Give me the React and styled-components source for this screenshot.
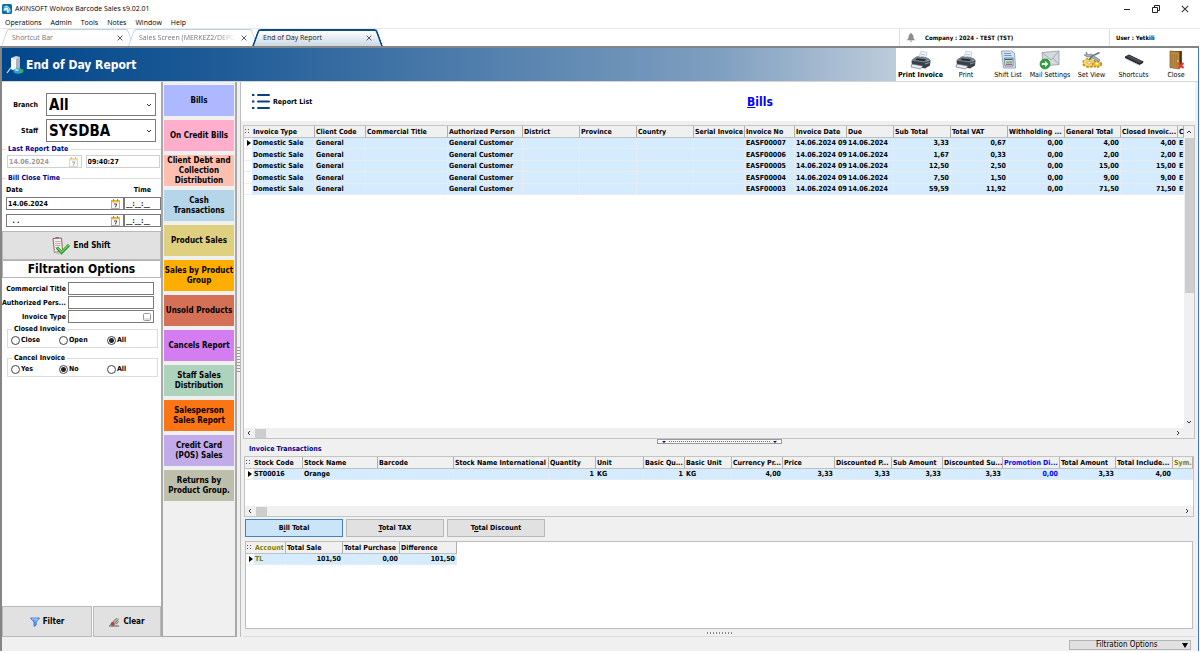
import React from 'react';
import styled, { createGlobalStyle } from 'styled-components';

const invoiceColumns = [
  { title: 'Invoice Type', width: 63 },
  { title: 'Client Code', width: 51 },
  { title: 'Commercial Title', width: 82 },
  { title: 'Authorized Person', width: 75 },
  { title: 'District', width: 57 },
  { title: 'Province', width: 57 },
  { title: 'Country', width: 57 },
  { title: 'Serial Invoice', width: 51 },
  { title: 'Invoice No', width: 50 },
  { title: 'Invoice Date', width: 52 },
  { title: 'Due', width: 47 },
  { title: 'Sub Total', width: 57, right: true },
  { title: 'Total VAT', width: 57, right: true },
  { title: 'Withholding ...', width: 57, right: true },
  { title: 'General Total', width: 56, right: true },
  { title: 'Closed Invoic...', width: 57, right: true },
  { title: 'C' },
];

const invoice = (no, sub, vat, total) => [
  'Domestic Sale', 'General', '', 'General Customer', '', '', '', '',
  no, '14.06.2024 09', '14.06.2024', sub, vat, '0,00', total, total, 'E',
];

const invoiceRows = [
  invoice('EASF00007', '3,33', '0,67', '4,00'),
  invoice('EASF00006', '1,67', '0,33', '2,00'),
  invoice('EASF00005', '12,50', '2,50', '15,00'),
  invoice('EASF00004', '7,50', '1,50', '9,00'),
  invoice('EASF00003', '59,59', '11,92', '71,50'),
];

const stockColumns = [
  { title: 'Stock Code', width: 50 },
  { title: 'Stock Name', width: 75 },
  { title: 'Barcode', width: 76 },
  { title: 'Stock Name International', width: 95 },
  { title: 'Quantity', width: 47, right: true },
  { title: 'Unit', width: 48 },
  { title: 'Basic Qu...', width: 41, right: true },
  { title: 'Basic Unit', width: 47 },
  { title: 'Currency Pr...', width: 51, right: true },
  { title: 'Price', width: 52, right: true },
  { title: 'Discounted P...', width: 57, right: true },
  { title: 'Sub Amount', width: 51, right: true },
  { title: 'Discounted Su...', width: 60, right: true },
  { title: 'Promotion Di...', width: 57, right: true, color: '#0000ff' },
  { title: 'Total Amount', width: 56, right: true },
  { title: 'Total Include...', width: 57, right: true },
  { title: 'Sym.', color: '#808000' },
];

const stockRows = [
  ['ST00016', 'Orange', '', '', '1', 'KG', '1', 'KG', '4,00', '3,33', '3,33', '3,33', '3,33', '0,00', '3,33', '4,00', ''],
];

const totalColumns = [
  { title: 'Account', width: 32, color: '#808000' },
  { title: 'Total Sale', width: 57, right: true },
  { title: 'Total Purchase', width: 57, right: true },
  { title: 'Difference', width: 57, right: true },
];

const totalRows = [['TL', '101,50', '0,00', '101,50']];

const reports = [
  { label: 'Bills', color: '#adb8ff' },
  { label: 'On Credit Bills', color: '#ffaecb' },
  { label: 'Client Debt and Collection Distribution', color: '#ffbfae' },
  { label: 'Cash Transactions', color: '#b5d5e8' },
  { label: 'Product Sales', color: '#dfd07f' },
  { label: 'Sales by Product Group', color: '#ffae00' },
  { label: 'Unsold Products', color: '#d37056' },
  { label: 'Cancels Report', color: '#d37df0' },
  { label: 'Staff Sales Distribution', color: '#aed3bd' },
  { label: 'Salesperson Sales Report', color: '#fa7514' },
  { label: 'Credit Card (POS) Sales', color: '#c1abe8' },
  { label: 'Returns by Product Group.', color: '#bdbfab' },
];

const PrinterIcon = () => (
  <svg width="22" height="20" viewBox="0 0 22 20">
    <path d="M8 9 L11 1 L17 2.5 L15 10 Z" fill="#f4f7fa" stroke="#a9b4bd" strokeWidth=".6" />
    <path d="M11 4 L15 5 M10.4 6 L14.4 7" stroke="#8aa9c8" strokeWidth=".7" />
    <path d="M3 9 L7 6.5 L18 8 L20.5 10.5 L20 15.5 L15 18.5 L2 15.5 L1.5 11 Z" fill="#394047" />
    <path d="M3 9 L7 6.5 L18 8 L20.5 10.5 L15 12.5 L1.5 10.8 Z" fill="#717c86" />
    <path d="M7 8.5 L16 9.4 L14.5 11 L5.5 10 Z" fill="#1c2024" />
    <path d="M2 14 L13 16 L10.5 19 L1 17 Z" fill="#e6ecf1" stroke="#59636c" strokeWidth=".6" />
    <path d="M15 14 L19.5 12.5" stroke="#aeb8c0" strokeWidth=".8" />
    <circle cx="18" cy="10.5" r=".7" fill="#8fd0ff" />
  </svg>
);

const ShiftListIcon = () => (
  <svg width="22" height="20" viewBox="0 0 22 20">
    <path d="M4.5 1 H14.5 L17.5 3 L18.5 18 H6.5 Z" fill="#d6e3ee" stroke="#8fa9c0" />
    <path d="M7 3.5 H14 M7.2 5.5 H14.5" stroke="#6c8fb5" strokeWidth=".9" />
    <path d="M7.5 8 H16 V16 H8 Z" fill="#fff" stroke="#50759b" strokeWidth=".9" />
    <path d="M8 9.5 H15.5" stroke="#34557b" strokeWidth="1.3" />
    <path d="M9 12 H15" stroke="#49a449" strokeWidth="1.4" />
    <path d="M9 14.2 H15" stroke="#cf4141" strokeWidth="1.4" />
  </svg>
);

const MailIcon = () => (
  <svg width="22" height="20" viewBox="0 0 22 20">
    <path d="M3 2.5 L20 1 V14.5 L4 16 Z" fill="#d5dade" stroke="#939ba1" strokeWidth=".8" />
    <path d="M3 2.5 L12 10 L20 1 M4 16 L9.5 8 M20 14.5 L14 8" fill="none" stroke="#959da3" strokeWidth=".8" />
    <circle cx="6" cy="14" r="5" fill="#2ea33a" stroke="#16752a" strokeWidth=".6" />
    <path d="M2.8 13 H6 V11 L9.4 14 L6 17 V15 H2.8 Z" fill="#fff" />
  </svg>
);

const GearIcon = () => (
  <svg width="22" height="20" viewBox="0 0 22 20">
    <ellipse cx="8" cy="13" rx="6" ry="4" fill="#edc242" stroke="#c39015" strokeWidth="2" strokeDasharray="2.4 1.6" />
    <ellipse cx="8" cy="12.6" rx="5.4" ry="3.4" fill="#f6d768" />
    <ellipse cx="8" cy="12.6" rx="2" ry="1.3" fill="#fff" stroke="#b88a1b" strokeWidth=".6" />
    <ellipse cx="16" cy="14" rx="4.2" ry="3" fill="#edc242" stroke="#c39015" strokeWidth="1.8" strokeDasharray="2 1.4" />
    <ellipse cx="16" cy="13.6" rx="1.4" ry=".9" fill="#fff" />
    <path d="M5 2 L7.5 4.8 L10 4 L19 10 L17.5 11.5 L9 6.8 L6 7 L3 4.8 L5.5 5 Z" fill="#aab3ba" stroke="#5d676e" strokeWidth=".6" />
    <path d="M18.5 2.5 L11 6 L8 10" fill="none" stroke="#657078" strokeWidth="1.5" />
  </svg>
);

const KeyboardIcon = () => (
  <svg width="22" height="20" viewBox="0 0 22 20">
    <path d="M2 6.5 L6 4.5 L20.5 11.5 L20 13 L16.5 15 L2 8 Z" fill="#25282c" />
    <path d="M3.5 6.8 L6 5.5 L19 11.7 L16.5 13 Z" fill="#595f66" />
    <path d="M5 6.5 L17.5 12.4" stroke="#2b2e32" strokeWidth=".8" strokeDasharray="1.4 .6" />
    <path d="M2 8.5 L16.5 15.5" stroke="#b9bec3" strokeWidth=".7" />
  </svg>
);

const DoorIcon = () => (
  <svg width="22" height="20" viewBox="0 0 22 20">
    <path d="M5 1 H17 V17.5 H5 Z" fill="#6e4a1b" />
    <path d="M14 2 H16 V17 H14 Z" fill="#4a2e0e" />
    <path d="M5 1 L14.5 2 V19 L5 17.5 Z" fill="#b98a45" stroke="#7b5420" strokeWidth=".7" />
    <path d="M7.2 3.5 V16 M9.6 4 V16.5 M11.8 4.3 V16.8" stroke="#9c7031" strokeWidth=".7" />
    <circle cx="12.8" cy="11" r=".8" fill="#f3dc8c" />
    <path d="M13.5 13 L18.5 18 M18.5 13 L13.5 18" stroke="#e03b32" strokeWidth="2" />
  </svg>
);

const LogoIcon = () => (
  <svg width="10" height="10" viewBox="0 0 10 10">
    <rect width="10" height="10" rx="1.5" fill="#17699d" />
    <path d="M1.5 2.5 L5 1.2 L8.5 5 V8.8 H5.5 L1.5 6 Z" fill="#4fb3df" />
    <path d="M2 6.5 C3.5 3.5 6 3.5 6 8.5" fill="none" stroke="#fff" strokeWidth="1.4" />
    <path d="M3 2.5 C6 2 8 4 8 7" fill="none" stroke="#d7f0fb" strokeWidth=".8" />
  </svg>
);

const ReportIcon = () => (
  <svg width="18" height="20" viewBox="0 0 18 20">
    <path d="M5 3 L10 1 L14 2 V14 L10 16 L5 14 Z" fill="#cfd6dc" />
    <path d="M5 3 L10 4.2 V16 L5 14 Z" fill="#f4f6f8" />
    <path d="M10 4.2 L14 2 V14 L10 16 Z" fill="#aab4bd" />
    <path d="M5 12.5 L1 18" stroke="#dfe7ee" strokeWidth="1.2" />
    <ellipse cx="12" cy="16" rx="4.5" ry="2.8" fill="#2e9fd6" />
    <ellipse cx="10.8" cy="15" rx="2" ry="1" fill="#a9e2fa" />
    <circle cx="15.5" cy="16" r="2" fill="#3fae49" />
  </svg>
);

const BellIcon = () => (
  <svg width="8" height="9" viewBox="0 0 8 9">
    <path d="M4 0 C4.6 0 4.8 .6 4.7 1 C6.4 1.6 6.4 3 6.5 4.5 C6.6 5.8 7.5 6.3 8 7.2 H0 C.5 6.3 1.4 5.8 1.5 4.5 C1.6 3 1.6 1.6 3.3 1 C3.2 .6 3.4 0 4 0 Z M3 7.7 H5 C5 9 3 9 3 7.7 Z" fill="#8c8c8c" />
  </svg>
);

const CalendarIcon = () => (
  <svg width="9" height="10" viewBox="0 0 9 10">
    <rect x=".5" y="1.5" width="8" height="8" fill="#fafafa" stroke="#8f8f8f" strokeWidth=".7" />
    <path d="M.3 1.2 H8.7 V3.4 H.3 Z" fill="#f0b93a" />
    <path d="M2.5 0 V2 M6.5 0 V2" stroke="#8a6a20" strokeWidth=".8" />
    <path d="M3 5 H5.8 L4.3 8.4" fill="none" stroke="#333" strokeWidth=".9" />
  </svg>
);

const EndShiftIcon = () => (
  <svg width="18" height="18" viewBox="0 0 18 18">
    <path d="M1 1.5 L9.5 1 L10.5 14 L2.5 15.5 Z" fill="#f2eeee" stroke="#a05f64" />
    <path d="M3.5 .8 L7 .5" stroke="#777" strokeWidth="1.6" />
    <path d="M3 4.5 H8.5 M3 6.5 H8.5 M3.2 8.5 H8.5 M3.4 10.5 H7" stroke="#bb8c90" strokeWidth=".7" />
    <path d="M1 13 L7 17.5" stroke="#b9babc" strokeWidth="1.2" />
    <path d="M5 10.5 L9.5 15.5 L17 8" fill="none" stroke="#1d8a25" strokeWidth="3" />
    <path d="M5.4 10.6 L9.5 15 L16.6 8" fill="none" stroke="#63d254" strokeWidth="1.6" />
  </svg>
);

const FunnelIcon = () => (
  <svg width="10" height="10" viewBox="0 0 10 10">
    <path d="M.5 1 H9.5 L6.2 5 V8 L4 9.5 V5 Z" fill="#5d9cf5" stroke="#2b6fd6" strokeWidth=".8" />
    <path d="M2 2 H7.5 L5.2 4.6" fill="none" stroke="#cfe2ff" strokeWidth=".8" />
  </svg>
);

const EraserIcon = () => (
  <svg width="11" height="10" viewBox="0 0 11 10">
    <path d="M0 9 H10" stroke="#333" strokeWidth=".8" />
    <path d="M1.5 7.5 L7 1.5 L9.5 2.5 L4.5 8.5 Z" fill="#9fb3b8" stroke="#444" strokeWidth=".6" />
    <circle cx="3.6" cy="6.8" r="1.8" fill="#d5362b" />
    <path d="M7 2.2 L8.6 .5 L10 1.6 L8.8 3.3 Z" fill="#f0b93a" />
    <path d="M7 7.5 L9.5 4.5" stroke="#555" strokeWidth=".8" />
  </svg>
);

const ListIcon = () => (
  <svg width="18" height="17" viewBox="0 0 18 17">
    <path d="M6 2 H17 M6 8.5 H17 M6 15 H17" stroke="#0b3f86" strokeWidth="2" strokeLinecap="round" />
    <path d="M0 2 H2.4 M0 8.5 H2.4 M0 15 H2.4" stroke="#0b3f86" strokeWidth="2" />
  </svg>
);

const Chevron = ({ turn = 0, size = 6 }) => (
  <svg width={size} height={size} viewBox="0 0 6 6">
    <path d="M1 2 L3 4 L5 2" fill="none" stroke="#333" strokeWidth="1" transform={`rotate(${turn} 3 3)`} />
  </svg>
);

const CrossIcon = ({ size = 6 }) => (
  <svg width={size} height={size} viewBox="0 0 6 6">
    <path d="M.6 .6 L5.4 5.4 M5.4 .6 L.6 5.4" stroke="#333" strokeWidth=".8" />
  </svg>
);

const tools = [
  { label: 'Print Invoice', icon: PrinterIcon, strong: true, width: 49 },
  { label: 'Print', icon: PrinterIcon, width: 42 },
  { label: 'Shift List', icon: ShiftListIcon, width: 42 },
  { label: 'Mail Settings', icon: MailIcon, width: 42 },
  { label: 'Set View', icon: GearIcon, width: 41 },
  { label: 'Shortcuts', icon: KeyboardIcon, width: 43 },
  { label: 'Close', icon: DoorIcon, width: 42 },
];

const Grid = ({ label, columns, rows, compact }) => (
  <Table $compact={compact} aria-label={label}>
    <colgroup>
      <col style={{ width: 8 }} />
      {columns.map((column) => (
        <col key={column.title} style={{ width: column.width }} />
      ))}
    </colgroup>
    <thead>
      <tr>
        <HeadCell $marker>
          <Dots />
        </HeadCell>
        {columns.map((column) => (
          <HeadCell key={column.title} $color={column.color}>
            {column.title}
          </HeadCell>
        ))}
      </tr>
    </thead>
    <tbody>
      {rows.map((row, index) => (
        <Row key={index}>
          <MarkerCell>{index === 0 && <RowArrow />}</MarkerCell>
          {row.map((value, i) => (
            <Cell key={columns[i].title} $right={columns[i].right} $color={columns[i].color}>
              {value}
            </Cell>
          ))}
        </Row>
      ))}
    </tbody>
  </Table>
);

const HorizontalScroll = ({ wide }) => (
  <HScroll $wide={wide}>
    <Chevron turn={90} />
    <HThumb />
    <Chevron turn={-90} />
  </HScroll>
);

const RadioGroup = ({ title, name, options, value }) => (
  <Group>
    <Legend>{title}</Legend>
    <Radios>
      {options.map((option) => (
        <RadioLabel key={option}>
          <Radio name={name} defaultChecked={option === value} />
          {option}
        </RadioLabel>
      ))}
    </Radios>
  </Group>
);

const DateRow = ({ name, value }) => (
  <CloseTimeRow>
    <DateBox>
      <BareInput aria-label={`${name} date`} defaultValue={value} />
      <CalendarIcon />
    </DateBox>
    <DateBox>
      <BareInput aria-label={`${name} time`} defaultValue="__:__:__" />
    </DateBox>
  </CloseTimeRow>
);

const App = () => {
  return (
    <Window>
      <GlobalStyle />
      <TitleBar>
        <LogoIcon />
        <span>AKINSOFT Wolvox Barcode Sales s9.02.01</span>
        <WindowButtons>
          <WindowButton aria-label="Minimize">
            <svg width="8" height="8" viewBox="0 0 8 8">
              <path d="M1 4.5 H7" stroke="#222" />
            </svg>
          </WindowButton>
          <WindowButton aria-label="Restore">
            <svg width="8" height="8" viewBox="0 0 8 8">
              <path d="M.5 2.5 H5.5 V7.5 H.5 Z M2.5 2.5 V.5 H7.5 V5.5 H5.5" fill="none" stroke="#222" />
            </svg>
          </WindowButton>
          <WindowButton aria-label="Close window">
            <CrossIcon size={8} />
          </WindowButton>
        </WindowButtons>
      </TitleBar>
      <MenuBar>
        {['Operations', 'Admin', 'Tools', 'Notes', 'Window', 'Help'].map((item) => (
          <MenuItem key={item}>{item}</MenuItem>
        ))}
      </MenuBar>
      <TabStrip>
        <Tab $width={127}>
          <TabText>Shortcut Bar</TabText>
          <CrossIcon />
        </Tab>
        <Tab $width={124}>
          <TabText $fade>Sales Screen (MERKEZ2/DEPO</TabText>
          <CrossIcon />
        </Tab>
        <Tab $width={125} $active>
          <TabText>End of Day Report</TabText>
          <CrossIcon />
        </Tab>
        <CompanyBar>
          <Company>
            <BellIcon />
            Company : 2024 - TEST (TST)
          </Company>
          <User>User : Yetkili</User>
        </CompanyBar>
      </TabStrip>

      <Frame>
        <Banner>
          <ReportIcon />
          <BannerTitle>End of Day Report</BannerTitle>
          <Toolbar>
            {tools.map(({ label, icon: Icon, strong, width }) => (
              <Tool key={label} $strong={strong} $width={width}>
                <Icon />
                {label}
              </Tool>
            ))}
          </Toolbar>
        </Banner>

        <Body>
          <FilterPanel>
            <PickRow>
              <span>Branch</span>
              <Picker>
                <PickSelect>
                  <option>All</option>
                </PickSelect>
                <Chevron />
              </Picker>
            </PickRow>
            <PickRow>
              <span>Staff</span>
              <Picker>
                <PickSelect>
                  <option>SYSDBA</option>
                </PickSelect>
                <Chevron />
              </Picker>
            </PickRow>

            <DateGroup>
              <Legend $blue>Last Report Date</Legend>
              <LastReport>
                <DateBox $off>
                  <BareInput aria-label="Last report date" disabled defaultValue="14.06.2024" />
                  <CalendarIcon />
                </DateBox>
                <DateBox $pale>
                  <BareInput aria-label="Last report time" defaultValue="09:40:27" />
                </DateBox>
              </LastReport>
            </DateGroup>
            <DateGroup>
              <Legend $blue>Bill Close Time</Legend>
              <DateHeads>
                <span>Date</span>
                <span>Time</span>
              </DateHeads>
              <DateRow name="From" value="14.06.2024" />
              <DateRow name="To" value="  . ." />
            </DateGroup>

            <EndShift>
              <EndShiftIcon />
              End Shift
            </EndShift>
            <FilterTitle>Filtration Options</FilterTitle>

            <Fields>
              <Field>
                <span>Commercial Title</span>
                <FieldInput />
              </Field>
              <Field>
                <span>Authorized Pers...</span>
                <FieldInput />
              </Field>
              <Field>
                <span>Invoice Type</span>
                <FieldBox>
                  <BareInput />
                  <svg width="8" height="8" viewBox="0 0 8 8">
                    <rect x=".5" y=".5" width="7" height="7" rx="1" fill="#fff" stroke="#999" />
                    <path d="M1.5 6 H6.5" stroke="#888" strokeDasharray="1 1" />
                  </svg>
                </FieldBox>
              </Field>
            </Fields>
            <RadioGroup title="Closed Invoice" name="closed" options={['Close', 'Open', 'All']} value="All" />
            <RadioGroup title="Cancel Invoice" name="cancel" options={['Yes', 'No', 'All']} value="No" />

            <FilterActions>
              <GrayButton>
                <FunnelIcon />
                Filter
              </GrayButton>
              <GrayButton>
                <EraserIcon />
                Clear
              </GrayButton>
            </FilterActions>
          </FilterPanel>

          <ReportNav>
            {reports.map((report) => (
              <ReportButton key={report.label} $color={report.color}>
                {report.label}
              </ReportButton>
            ))}
          </ReportNav>
          <SideSplitter>
            <VerticalGrip />
          </SideSplitter>

          <Main>
            <ReportHeader>
              <ReportListButton>
                <ListIcon />
                Report List
              </ReportListButton>
              <ReportTitle>
                <u>B</u>ills
              </ReportTitle>
            </ReportHeader>

            <Panels>
              <InvoiceGrid>
                <InvoiceArea>
                  <GridClip>
                    <Grid label="Invoices" columns={invoiceColumns} rows={invoiceRows} />
                  </GridClip>
                  <VScroll>
                    <Chevron turn={180} />
                    <VThumb />
                    <Chevron />
                  </VScroll>
                </InvoiceArea>
                <HorizontalScroll />
              </InvoiceGrid>

              <Splitter>
                <SplitHandle>
                  <Triangle />
                  <HandleDots />
                  <Triangle />
                </SplitHandle>
              </Splitter>

              <Transactions>
                <Legend $blue>Invoice Transactions</Legend>
                <StockGrid>
                  <GridClip>
                    <Grid label="Invoice transactions" columns={stockColumns} rows={stockRows} />
                  </GridClip>
                  <HorizontalScroll wide />
                </StockGrid>
              </Transactions>

              <TotalTabs>
                <TotalTab $active>
                  B<u>i</u>ll Total
                </TotalTab>
                <TotalTab>
                  <u>T</u>otal TAX
                </TotalTab>
                <TotalTab>
                  T<u>o</u>tal Discount
                </TotalTab>
              </TotalTabs>
              <TotalPanel>
                <Grid compact label="Totals" columns={totalColumns} rows={totalRows} />
              </TotalPanel>
              <BottomSplitter>
                <HorizontalGrip />
              </BottomSplitter>
            </Panels>
          </Main>
        </Body>

        <StatusBar>
          <StatusButton>
            <span>Filtration Options</span>
            <Triangle $dark />
          </StatusButton>
        </StatusBar>
      </Frame>
    </Window>
  );
};

const GlobalStyle = createGlobalStyle`
  * {
    box-sizing: border-box;
  }
  body {
    margin: 0;
    background: #fff;
    color: #000;
    font: 7px/10px 'DejaVu Sans Condensed', 'DejaVu Sans', sans-serif;
  }
  button, input, select {
    margin: 0;
    padding: 0;
    border: 0;
    border-radius: 0;
    background: none;
    color: inherit;
    font: inherit;
  }
  svg {
    display: block;
    flex: none;
  }
`;

const Window = styled.div`
  min-height: 100vh;
  padding-bottom: 2px;
  display: flex;
  flex-direction: column;
`;

const TitleBar = styled.header`
  height: 17px;
  padding-left: 2px;
  display: flex;
  align-items: center;
  gap: 3px;
  font-family: 'Open Sans', sans-serif;
`;

const WindowButtons = styled.div`
  margin-left: auto;
  padding-right: 1px;
  display: flex;
`;

const WindowButton = styled.button`
  width: 29px;
  height: 16px;
  display: grid;
  place-items: center;
`;

const MenuBar = styled.nav`
  height: 11px;
  padding-left: 5px;
  display: flex;
  gap: 9px;
  font-family: 'Open Sans', sans-serif;
`;

const MenuItem = styled.button`
  height: 11px;
`;

const TabStrip = styled.div`
  height: 18px;
  border-top: 1px solid #e8e8e8;
  padding-left: 4px;
  display: flex;
  font-family: 'Open Sans', sans-serif;
`;

const Tab = styled.button`
  position: relative;
  z-index: ${({ $active }) => ($active ? 1 : 0)};
  width: ${({ $width }) => $width}px;
  padding: 0 8px;
  display: flex;
  align-items: center;
  justify-content: space-between;
  color: ${({ $active }) => ($active ? '#222' : '#777')};
  text-align: left;

  &::before,
  &::after {
    content: '';
    position: absolute;
    z-index: -1;
    top: 0;
    bottom: 0;
    border: ${({ $active }) => ($active ? '2px solid #0d4a86' : '1px solid #b9cfe3')};
    border-bottom: 0;
    background: ${({ $active }) => ($active ? 'linear-gradient(#fff, #c9d8e6)' : 'linear-gradient(#fff, #fbfcfd)')};
  }
  &::before {
    left: 0;
    right: 50%;
    border-right: 0;
    border-top-left-radius: 3px;
    transform: skewX(-20deg);
  }
  &::after {
    left: 45%;
    right: 0;
    border-left: 0;
    border-top-right-radius: 3px;
    transform: skewX(20deg);
  }
`;

const TabText = styled.span`
  white-space: nowrap;
  ${({ $fade }) => $fade && 'mask-image: linear-gradient(90deg, #000 80%, transparent);'}
`;

const CompanyBar = styled.div`
  margin-left: auto;
  width: 301px;
  display: flex;
  font: bold 6px/17px 'DejaVu Sans Condensed', sans-serif;
`;

const Company = styled.div`
  flex: 1;
  padding-left: 7px;
  border-left: 1px solid #ddd;
  display: flex;
  align-items: center;
  gap: 10px;
`;

const User = styled.div`
  width: 91px;
  padding-left: 6px;
  border-left: 1px solid #ddd;
`;

const Frame = styled.div`
  flex: 1;
  display: flex;
  flex-direction: column;
  margin-right: 1px;
  border: solid #858585;
  border-width: 2px 0 0 2px;
  border-right: 1px solid #4472c4;
  background: #f0f0f0;
`;

const Banner = styled.div`
  height: 33px;
  padding-left: 4px;
  display: flex;
  align-items: center;
  gap: 2px;
  background: linear-gradient(90deg, #00468a 0%, #1e5b97 18%, #7f9fc0 60%, #bfcddc 75%);
`;

const BannerTitle = styled.h1`
  margin: 0;
  font-size: 12px;
  line-height: 16px;
  font-weight: bold;
  color: #fff;
`;

const Toolbar = styled.div`
  margin-left: auto;
  padding-right: 1px;
  height: 33px;
  display: flex;
  background: #fff;
`;

const Tool = styled.button`
  width: ${({ $width }) => $width}px;
  padding-top: 2px;
  display: flex;
  flex-direction: column;
  align-items: center;
  white-space: nowrap;
  font-weight: ${({ $strong }) => ($strong ? 'bold' : 'normal')};
`;

const Body = styled.div`
  flex: 1;
  display: flex;
  border-top: 1px solid #d5d5d5;
  font-weight: bold;
`;

const FilterPanel = styled.aside`
  width: 161px;
  padding-top: 11px;
  display: flex;
  flex-direction: column;
  background: #fff;
  border-right: 2px solid #a8a8a8;
`;

const PickRow = styled.label`
  display: grid;
  grid-template-columns: 36px 110px;
  column-gap: 8px;
  margin-bottom: 3px;
  align-items: center;
  text-align: right;
`;

const Picker = styled.span`
  height: 23px;
  padding: 0 3px 0 2px;
  display: flex;
  align-items: center;
  border: 1px solid #7a7a7a;
`;

const PickSelect = styled.select`
  flex: 1;
  min-width: 0;
  appearance: none;
  outline: 0;
  font-size: 15px;
  line-height: 20px;
`;

const Group = styled.fieldset`
  margin: 0 3px 6px 5px;
  padding: 0;
  min-width: 0;
  border: 1px solid #dcdcdc;
`;

const DateGroup = styled(Group)`
  margin: 0 0 1px;
  border-width: 1px 0 0;
`;

const Legend = styled.legend`
  margin-left: 4px;
  padding: 0 2px;
  line-height: 8px;
  color: ${({ $blue }) => ($blue ? '#00008b' : '#000')};
`;

const LastReport = styled.div`
  padding: 2px 1px 5px 5px;
  display: grid;
  grid-template-columns: 1fr 1fr;
  gap: 4px;
`;

const DateBox = styled.span`
  height: 13px;
  padding: 0 3px 0 1px;
  display: flex;
  align-items: center;
  border: 1px solid ${({ $off, $pale }) => ($off || $pale ? '#d0d0d0' : '#7a7a7a')};
  color: ${({ $off }) => ($off ? '#9a9a9a' : '#000')};
  svg {
    opacity: ${({ $off }) => ($off ? 0.5 : 1)};
  }
`;

const BareInput = styled.input`
  flex: 1;
  width: 100%;
  min-width: 0;
  height: 11px;
  outline: 0;
  white-space: pre;
`;

const DateHeads = styled.div`
  padding: 3px 10px 1px 4px;
  display: flex;
  justify-content: space-between;
`;

const CloseTimeRow = styled.div`
  padding: 1px 0 3px 4px;
  display: grid;
  grid-template-columns: 1fr 37px;
`;

const GrayButton = styled.button`
  display: flex;
  align-items: center;
  justify-content: center;
  gap: 3px;
  border: 1px solid #b9b9b9;
  background: #e1e1e1;
  font-size: 8px;
`;

const EndShift = styled(GrayButton)`
  height: 29px;
`;

const FilterTitle = styled.h2`
  margin: 0 0 4px;
  height: 18px;
  border: 1px solid #b5b5b5;
  font-size: 12px;
  line-height: 16px;
  text-align: center;
`;

const Fields = styled.div`
  display: grid;
  gap: 1px;
  margin-bottom: 2px;
`;

const Field = styled.label`
  display: grid;
  grid-template-columns: 64px 86px;
  column-gap: 2px;
  align-items: center;
  text-align: right;
  white-space: nowrap;
`;

const FieldInput = styled.input`
  height: 13px;
  border: 1px solid #7a7a7a;
`;

const FieldBox = styled.span`
  height: 13px;
  padding-right: 2px;
  display: flex;
  align-items: center;
  border: 1px solid #7a7a7a;
`;

const Radios = styled.div`
  height: 14px;
  padding-left: 3px;
  display: grid;
  grid-template-columns: 48px 48px 48px;
`;

const RadioLabel = styled.label`
  display: flex;
  align-items: center;
  gap: 1px;
`;

const Radio = styled.input.attrs({ type: 'radio' })`
  appearance: none;
  width: 9px;
  height: 9px;
  border: 1px solid #444;
  border-radius: 50%;
  background: #fff;
  &:checked {
    background: radial-gradient(circle, #222 2px, #fff 3px);
  }
`;

const FilterActions = styled.div`
  margin-top: auto;
  height: 31px;
  display: grid;
  grid-template-columns: 90px 1fr;
  gap: 1px;
`;

const ReportNav = styled.nav`
  width: 74px;
  padding: 3px 1px;
  display: flex;
  flex-direction: column;
  gap: 4px;
  border: solid #a8a8a8;
  border-width: 0 2px 1px 0;
`;

const ReportButton = styled.button`
  height: 31px;
  background: ${({ $color }) => $color};
  font-size: 8px;
  line-height: 10px;
`;

const SideSplitter = styled.div`
  width: 4px;
  display: flex;
  align-items: center;
  justify-content: center;
  border-right: 1px solid #bdbdbd;
`;

const VerticalGrip = styled.div`
  width: 3px;
  height: 25px;
  background: repeating-linear-gradient(#999 0 1px, #f0f0f0 1px 3px);
`;

const Main = styled.main`
  flex: 1;
  min-width: 0;
  padding-right: 3px;
  display: flex;
  flex-direction: column;
`;

const ReportHeader = styled.div`
  height: 39px;
  padding: 0 11px;
  display: grid;
  grid-template-columns: 1fr auto 1fr;
  align-items: center;
  background: #fff;
`;

const ReportListButton = styled.button`
  justify-self: start;
  display: flex;
  align-items: center;
  gap: 3px;
`;

const ReportTitle = styled.a.attrs({ href: '#bills' })`
  padding-left: 84px;
  font-size: 12px;
  line-height: 16px;
  color: #0000ff;
  text-decoration: none;
`;

const Panels = styled.div`
  flex: 1;
  padding-left: 2px;
  display: flex;
  flex-direction: column;
`;

const InvoiceGrid = styled.section`
  margin-top: 4px;
  flex: 1;
  display: flex;
  flex-direction: column;
  border: 1px solid #c4c4c4;
  background: #fff;
`;

const InvoiceArea = styled.div`
  flex: 1;
  display: flex;
`;

const GridClip = styled.div`
  flex: 1;
  min-width: 0;
  overflow: hidden;
`;

const Table = styled.table`
  width: ${({ $compact }) => ($compact ? '211px' : '100%')};
  table-layout: fixed;
  border-collapse: separate;
  border-spacing: 0;
  line-height: 10px;
`;

const HeadCell = styled.th`
  height: 12px;
  padding: 0 0 0 1px;
  border-right: 1px solid ${({ $marker }) => ($marker ? '#f0f0f0' : '#b0b0b0')};
  border-bottom: 1px solid #c0c0c0;
  background: #f0f0f0;
  color: ${({ $color }) => $color || '#000'};
  text-align: left;
  white-space: nowrap;
`;

const Row = styled.tr`
  height: 11px;
  &:nth-child(even) {
    height: 12px;
  }
`;

const Cell = styled.td`
  padding: 0 ${({ $right }) => ($right ? 1 : 0)}px 0 1px;
  border: solid #e6ecf0;
  border-width: 0 1px 1px 0;
  background: #d5ebff;
  color: ${({ $color }) => $color || '#000'};
  text-align: ${({ $right }) => ($right ? 'right' : 'left')};
  white-space: nowrap;
`;

const MarkerCell = styled.td`
  padding: 0 0 0 3px;
  border-bottom: 1px solid #eee;
  background: #fff;
`;

const RowArrow = styled.div`
  border: solid transparent;
  border-width: 3px 0 3px 4px;
  border-left-color: #000;
`;

const Dots = styled.div`
  width: 5px;
  height: 5px;
  background: repeating-linear-gradient(90deg, transparent 0 1px, #f0f0f0 1px 3px),
    repeating-linear-gradient(#555 0 1px, #f0f0f0 1px 3px);
`;

const VScroll = styled.div`
  width: 10px;
  padding: 3px 0;
  display: flex;
  flex-direction: column;
  align-items: center;
  background: #f0f0f0;
  svg:last-child {
    margin-top: auto;
  }
`;

const VThumb = styled.div`
  width: 9px;
  height: 155px;
  margin-top: 3px;
  background: #cdcdcd;
`;

const HScroll = styled.div`
  height: 10px;
  padding: 0 ${({ $wide }) => ($wide ? 3 : 13)}px 0 2px;
  display: flex;
  align-items: center;
  gap: 3px;
  background: #f0f0f0;
  svg:last-child {
    margin-left: auto;
  }
`;

const HThumb = styled.div`
  width: 11px;
  height: 9px;
  background: #cdcdcd;
`;

const Splitter = styled.div`
  height: 6px;
  display: flex;
  justify-content: center;
`;

const SplitHandle = styled.div`
  width: 125px;
  height: 5px;
  padding: 0 4px;
  display: flex;
  align-items: center;
  gap: 3px;
  border: 1px solid #999;
  background: #fff;
`;

const Triangle = styled.span`
  border: solid transparent;
  border-width: ${({ $dark }) => ($dark ? '5px 3px 0' : '2px 2px 0')};
  border-top-color: ${({ $dark }) => ($dark ? '#000' : '#00007a')};
`;

const HandleDots = styled.div`
  flex: 1;
  height: 1px;
  background: repeating-linear-gradient(90deg, #667 0 1px, #fff 1px 2px);
`;

const Transactions = styled.fieldset`
  margin: 0;
  padding: 1px 0 0;
  min-width: 0;
  border: 0;
`;

const StockGrid = styled.div`
  height: 61px;
  margin: 2px 1px 0;
  display: flex;
  flex-direction: column;
  border: 1px solid #c4c4c4;
  background: #fff;
`;

const TotalTabs = styled.div`
  padding: 2px 2px 4px;
  display: grid;
  grid-template-columns: 98px 98px 98px;
  gap: 3px;
`;

const TotalTab = styled.button`
  height: 18px;
  border: 1px solid ${({ $active }) => ($active ? '#3d84c6' : '#b9b9b9')};
  background: ${({ $active }) => ($active ? '#cce4f7' : '#e1e1e1')};
`;

const TotalPanel = styled.section`
  height: 88px;
  margin: 0 2px;
  border: 1px solid #bdbdbd;
  background: #fff;
`;

const BottomSplitter = styled.div`
  height: 8px;
  display: grid;
  place-items: center;
  border-bottom: 1px solid #ddd;
`;

const HorizontalGrip = styled.div`
  width: 25px;
  height: 2px;
  background: repeating-linear-gradient(90deg, #888 0 1px, #f0f0f0 1px 3px);
`;

const StatusBar = styled.footer`
  height: 14px;
  padding: 3px 7px 1px;
  display: flex;
  justify-content: flex-end;
`;

const StatusButton = styled.button`
  width: 122px;
  height: 10px;
  padding: 0 2px 0 26px;
  display: flex;
  align-items: center;
  justify-content: space-between;
  border: 1px solid #b5b5b5;
  background: #e1e1e1;
  font-size: 8px;
  line-height: 8px;
`;

export default App;
